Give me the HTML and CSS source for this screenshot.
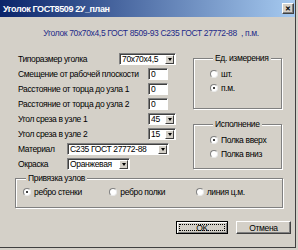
FILE: index.html
```html
<!DOCTYPE html>
<html>
<head>
    <meta charset="utf-8">
    <title>Уголок ГОСТ8509 2У_план</title>
    <link rel="stylesheet" href="styles.css">
</head>
<body>
    <div class="window">
        <!-- заголовок окна -->
        <div class="titlebar">
            <span class="title">Уголок ГОСТ8509 2У_план</span>
            <span class="close">✕</span>
        </div>

        <div class="content">
            <div class="caption">Уголок 70x70x4,5 ГОСТ 8509-93 С235 ГОСТ 27772-88&nbsp;&nbsp;, п.м.</div>

            <div class="main">
                <!-- параметры -->
                <div class="fields">
                    <div class="row">
                        <span class="label label-size">Типоразмер уголка</span>
                        <div class="field select w-size"><span class="value">70x70x4,5</span><i class="drop"></i></div>
                    </div>
                    <div class="row">
                        <span class="label label-long">Смещение от рабочей плоскости</span>
                        <div class="field w-small"><span class="value">0</span></div>
                    </div>
                    <div class="row">
                        <span class="label label-long">Расстояние от торца до узла 1</span>
                        <div class="field w-small"><span class="value">0</span></div>
                    </div>
                    <div class="row">
                        <span class="label label-long">Расстояние от торца до узла 2</span>
                        <div class="field w-small"><span class="value">0</span></div>
                    </div>
                    <div class="row">
                        <span class="label label-long">Угол среза в узле 1</span>
                        <div class="field select w-angle"><span class="value">45</span><i class="drop"></i></div>
                    </div>
                    <div class="row">
                        <span class="label label-long">Угол среза в узле 2</span>
                        <div class="field select w-angle"><span class="value">15</span><i class="drop"></i></div>
                    </div>
                    <div class="row">
                        <span class="label label-short">Материал</span>
                        <div class="field select w-material"><span class="value">С235 ГОСТ 27772-88</span><i class="drop"></i></div>
                    </div>
                    <div class="row">
                        <span class="label label-short">Окраска</span>
                        <div class="field select w-color"><span class="value">Оранжевая</span><i class="drop"></i></div>
                    </div>
                </div>

                <!-- переключатели -->
                <div class="groups">
                    <fieldset class="group group-units">
                        <legend>Ед. измерения</legend>
                        <div class="radio"><i class="mark"></i>шт.</div>
                        <div class="radio"><i class="mark checked"></i>п.м.</div>
                    </fieldset>
                    <fieldset class="group group-side">
                        <legend>Исполнение</legend>
                        <div class="radio"><i class="mark checked"></i>Полка вверх</div>
                        <div class="radio"><i class="mark"></i>Полка вниз</div>
                    </fieldset>
                </div>
            </div>

            <fieldset class="group group-bind">
                <legend>Привязка узлов</legend>
                <div class="radio"><i class="mark checked"></i>ребро стенки</div>
                <div class="radio"><i class="mark"></i>ребро полки</div>
                <div class="radio"><i class="mark"></i>линия ц.м.</div>
            </fieldset>

            <div class="buttons">
                <div class="btn btn-default"><span class="focus">OK</span></div>
                <div class="btn btn-cancel">Отмена</div>
            </div>
        </div>
    </div>
</body>
</html>
```

FILE: styles.css
```css
* {
    box-sizing: border-box;
}

body {
    margin: 0;
    background: #d4d0c8;
    font-family: "Liberation Sans", Arial, sans-serif;
    font-size: 8.5px;
    letter-spacing: -0.35px;
    color: #000;
}

.window {
    width: 296px;
    height: 248px;
    border-right: 1px solid #404040;
    border-bottom: 1px solid #404040;
    background: #d4d0c8;
}

.titlebar {
    height: 17px;
    display: flex;
    align-items: center;
    justify-content: space-between;
    padding: 0 1px 0 3px;
    background: linear-gradient(to right, #0a246a, #a6caf0);
}

.title {
    color: #fff;
    font-weight: bold;
    font-size: 9px;
    letter-spacing: -0.4px;
}

.close {
    width: 12px;
    height: 11px;
    display: flex;
    justify-content: center;
    align-items: center;
    font-size: 7px;
    font-weight: bold;
    letter-spacing: 0;
    background: #d4d0c8;
    border: 1px solid;
    border-color: #fff #404040 #404040 #fff;
    box-shadow: inset -1px -1px 0 #808080;
}

.content {
    padding: 0 4px 0 15px;
}

.caption {
    margin-top: 11px;
    line-height: 10px;
    text-align: center;
    color: #1e2a88;
    padding-right: 4px;
}

.main {
    display: flex;
    margin-top: 15px;
}

.fields {
    width: 178px;
    padding-left: 3px;
    display: flex;
    flex-direction: column;
    gap: 3px;
}

.row {
    display: flex;
    align-items: center;
    height: 12px;
}

.label {
    white-space: nowrap;
}

.label-size { width: 101px; }
.label-long { width: 130px; }
.label-short { width: 49px; }

.field {
    height: 12px;
    display: flex;
    align-items: center;
    background: #fff;
    border: 1px solid;
    border-color: #808080 #fff #fff #808080;
    box-shadow: inset 1px 1px 0 #404040;
    padding-left: 2px;
    overflow: hidden;
}

.field .value {
    flex: 1;
    white-space: nowrap;
    overflow: hidden;
}

.select {
    padding-right: 1px;
}

.drop {
    width: 9px;
    height: 9px;
    flex: none;
    display: flex;
    justify-content: center;
    align-items: center;
    background: #d4d0c8;
    border: 1px solid;
    border-color: #fff #404040 #404040 #fff;
}

.drop::after {
    content: "";
    border-left: 2.5px solid transparent;
    border-right: 2.5px solid transparent;
    border-top: 3px solid #000;
}

.w-size { width: 57px; }
.w-small { width: 20px; }
.w-angle { width: 28px; }
.w-material { width: 102px; }
.w-color { width: 63px; }

.groups {
    width: 89px;
}

.group {
    margin: 0;
    min-width: 0;
    border: 1px solid #808080;
    box-shadow: inset 1px 1px 0 #fff, 1px 1px 0 #fff;
}

.group legend {
    line-height: 10px;
    padding: 0 2px;
    margin-left: 3px;
    background: #d4d0c8;
}

.radio {
    display: flex;
    align-items: center;
    gap: 3px;
    height: 10px;
    white-space: nowrap;
}

.mark {
    width: 8px;
    height: 8px;
    flex: none;
    border-radius: 50%;
    background: #fff;
    border: 1px solid;
    border-color: #808080 #e8e8e8 #e8e8e8 #808080;
    display: flex;
    justify-content: center;
    align-items: center;
}

.mark.checked::after {
    content: "";
    width: 2px;
    height: 2px;
    border-radius: 50%;
    background: #000;
}

.group-units {
    padding: 6px 0 15px 16px;
    display: flex;
    flex-direction: column;
    gap: 4px;
}

.group-side {
    margin-top: 10px;
    padding: 6px 0 9px 16px;
    display: flex;
    flex-direction: column;
    gap: 4px;
}

.group-bind {
    width: 268px;
    margin-top: 3px;
    padding: 4px 0 10px 7px;
    display: flex;
}

.group-bind .radio {
    width: 90px;
}

.buttons {
    display: flex;
    justify-content: flex-end;
    gap: 8px;
    margin-top: 13px;
}

.btn {
    height: 13px;
    display: flex;
    justify-content: center;
    align-items: center;
    background: #d4d0c8;
    border: 1px solid;
    border-color: #fff #404040 #404040 #fff;
    box-shadow: inset -1px -1px 0 #808080;
}

.btn-default {
    width: 52px;
    border-color: #000;
    box-shadow: inset 1px 1px 0 #fff, inset -1px -1px 0 #808080;
    padding: 2px;
}

.btn-default .focus {
    width: 100%;
    height: 100%;
    display: flex;
    justify-content: center;
    align-items: center;
    border: 1px dotted #000;
}

.btn-cancel {
    width: 55px;
}
```
